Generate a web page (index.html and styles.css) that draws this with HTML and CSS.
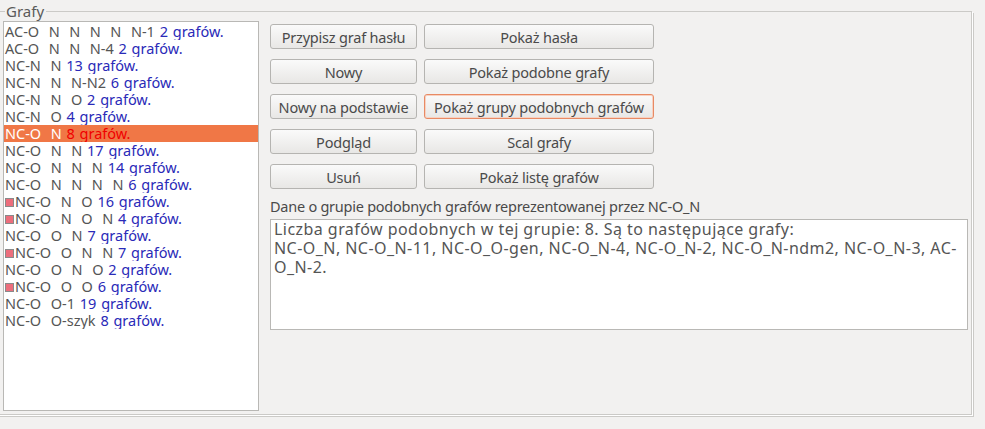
FILE: index.html
```html
<!DOCTYPE html>
<html lang="pl">

<head>
    <meta charset="UTF-8">
    <title>Grafy</title>
    <link rel="stylesheet" href="styles.css">
</head>

<body>
    <fieldset class="group">
        <legend>Grafy</legend>
        <div class="content">
            <ul class="list">
                <li>AC-O  N  N  N  N  N-1 <span class="count">2 grafów.</span></li>
                <li>AC-O  N  N  N-4 <span class="count">2 grafów.</span></li>
                <li>NC-N  N <span class="count">13 grafów.</span></li>
                <li>NC-N  N  N-N2 <span class="count">6 grafów.</span></li>
                <li>NC-N  N  O <span class="count">2 grafów.</span></li>
                <li>NC-N  O <span class="count">4 grafów.</span></li>
                <li class="selected">NC-O  N <span class="count">8 grafów.</span></li>
                <li>NC-O  N  N <span class="count">17 grafów.</span></li>
                <li>NC-O  N  N  N <span class="count">14 grafów.</span></li>
                <li>NC-O  N  N  N  N <span class="count">6 grafów.</span></li>
                <li><span class="mark"></span>NC-O  N  O <span class="count">16 grafów.</span></li>
                <li><span class="mark"></span>NC-O  N  O  N <span class="count">4 grafów.</span></li>
                <li>NC-O  O  N <span class="count">7 grafów.</span></li>
                <li><span class="mark"></span>NC-O  O  N  N <span class="count">7 grafów.</span></li>
                <li>NC-O  O  N  O <span class="count">2 grafów.</span></li>
                <li><span class="mark"></span>NC-O  O  O <span class="count">6 grafów.</span></li>
                <li>NC-O  O-1 <span class="count">19 grafów.</span></li>
                <li>NC-O  O-szyk <span class="count">8 grafów.</span></li>
            </ul>

            <div class="side">
                <div class="buttons">
                    <button class="btn">Przypisz graf hasłu</button>
                    <button class="btn">Pokaż hasła</button>
                    <button class="btn">Nowy</button>
                    <button class="btn">Pokaż podobne grafy</button>
                    <button class="btn">Nowy na podstawie</button>
                    <button class="btn focused">Pokaż grupy podobnych grafów</button>
                    <button class="btn">Podgląd</button>
                    <button class="btn">Scal grafy</button>
                    <button class="btn">Usuń</button>
                    <button class="btn">Pokaż listę grafów</button>
                </div>

                <div class="info-label">Dane o grupie podobnych grafów reprezentowanej przez NC-O_N</div>
                <div class="info">Liczba grafów podobnych w tej grupie: 8. Są to następujące grafy:
NC-O_N, NC-O_N-11, NC-O_O-gen, NC-O_N-4, NC-O_N-2, NC-O_N-ndm2, NC-O_N-3, AC-
O_N-2.</div>
            </div>
        </div>
    </fieldset>
</body>

</html>
```

FILE: styles.css
```css
body {
    margin: 0;
    background-color: #f2f1f0;
    font-family: "Noto Sans", sans-serif;
    font-size: 14px;
    color: #4a4a4a;
    width: 985px;
    height: 429px;
    overflow: hidden;
}

.group {
    margin: 3px 0 0 -2px;
    width: 974px;
    height: 412px;
    box-sizing: border-box;
    padding: 0;
    border: 1px solid #cbcac7;
    box-shadow: 1px 1px 0 #ffffff, 2px 2px 0 #cbcac7;
    border-left: none;
}

legend {
    margin-left: 7px;
    padding: 0 2px 0 1px;
    font-size: 15px;
    line-height: 16px;
    color: #5a5a5a;
}

.content {
    display: flex;
    gap: 11px;
    padding: 0 0 0 5px;
}

.list {
    margin: 2px 0 0 0;
    padding: 1px 0 0 0;
    list-style: none;
    width: 256px;
    height: 390px;
    background-color: #ffffff;
    border: 1px solid #b9b8b5;
    box-sizing: border-box;
}

.list li {
    height: 17px;
    line-height: 17px;
    padding-left: 1px;
    white-space: pre;
    font-size: 14.5px;
    word-spacing: 1px;
    color: #555555;
    overflow: hidden;
}

.count {
    color: #2a2ab8;
}

.list li.selected {
    background-color: #f07746;
    color: #ffffff;
}

.list li.selected .count {
    color: #f00000;
}

.mark {
    display: inline-block;
    width: 7px;
    height: 7px;
    margin-right: 1px;
    background-color: #ec6e7c;
    border: 1px solid #8a8a8a;
    vertical-align: 0;
}

.side {
    display: flex;
    flex-direction: column;
    padding-top: 5px;
}

.buttons {
    display: grid;
    grid-template-columns: 147px 230px;
    column-gap: 7px;
    row-gap: 10px;
}

.btn {
    height: 25px;
    padding: 0;
    font-family: "Noto Sans", sans-serif;
    font-size: 14.5px;
    color: #4a4a4a;
    background: linear-gradient(#fafafa, #e8e7e5);
    border: 1px solid #b5b4b1;
    border-radius: 3px;
    white-space: nowrap;
    letter-spacing: -0.2px;
}

.btn.focused {
    border-color: #e88a64;
    box-shadow: inset 0 0 0 1px #f7d2c2;
}

.info-label {
    margin-top: 8px;
    font-size: 14.5px;
    line-height: 18px;
    letter-spacing: -0.25px;
    color: #4a4a4a;
}

.info {
    margin-top: 4px;
    width: 698px;
    height: 111px;
    box-sizing: border-box;
    padding: 0 3px;
    background-color: #ffffff;
    border: 1px solid #b9b8b5;
    font-size: 16px;
    line-height: 19px;
    letter-spacing: 0.45px;
    color: #555555;
    white-space: pre-wrap;
}
```
